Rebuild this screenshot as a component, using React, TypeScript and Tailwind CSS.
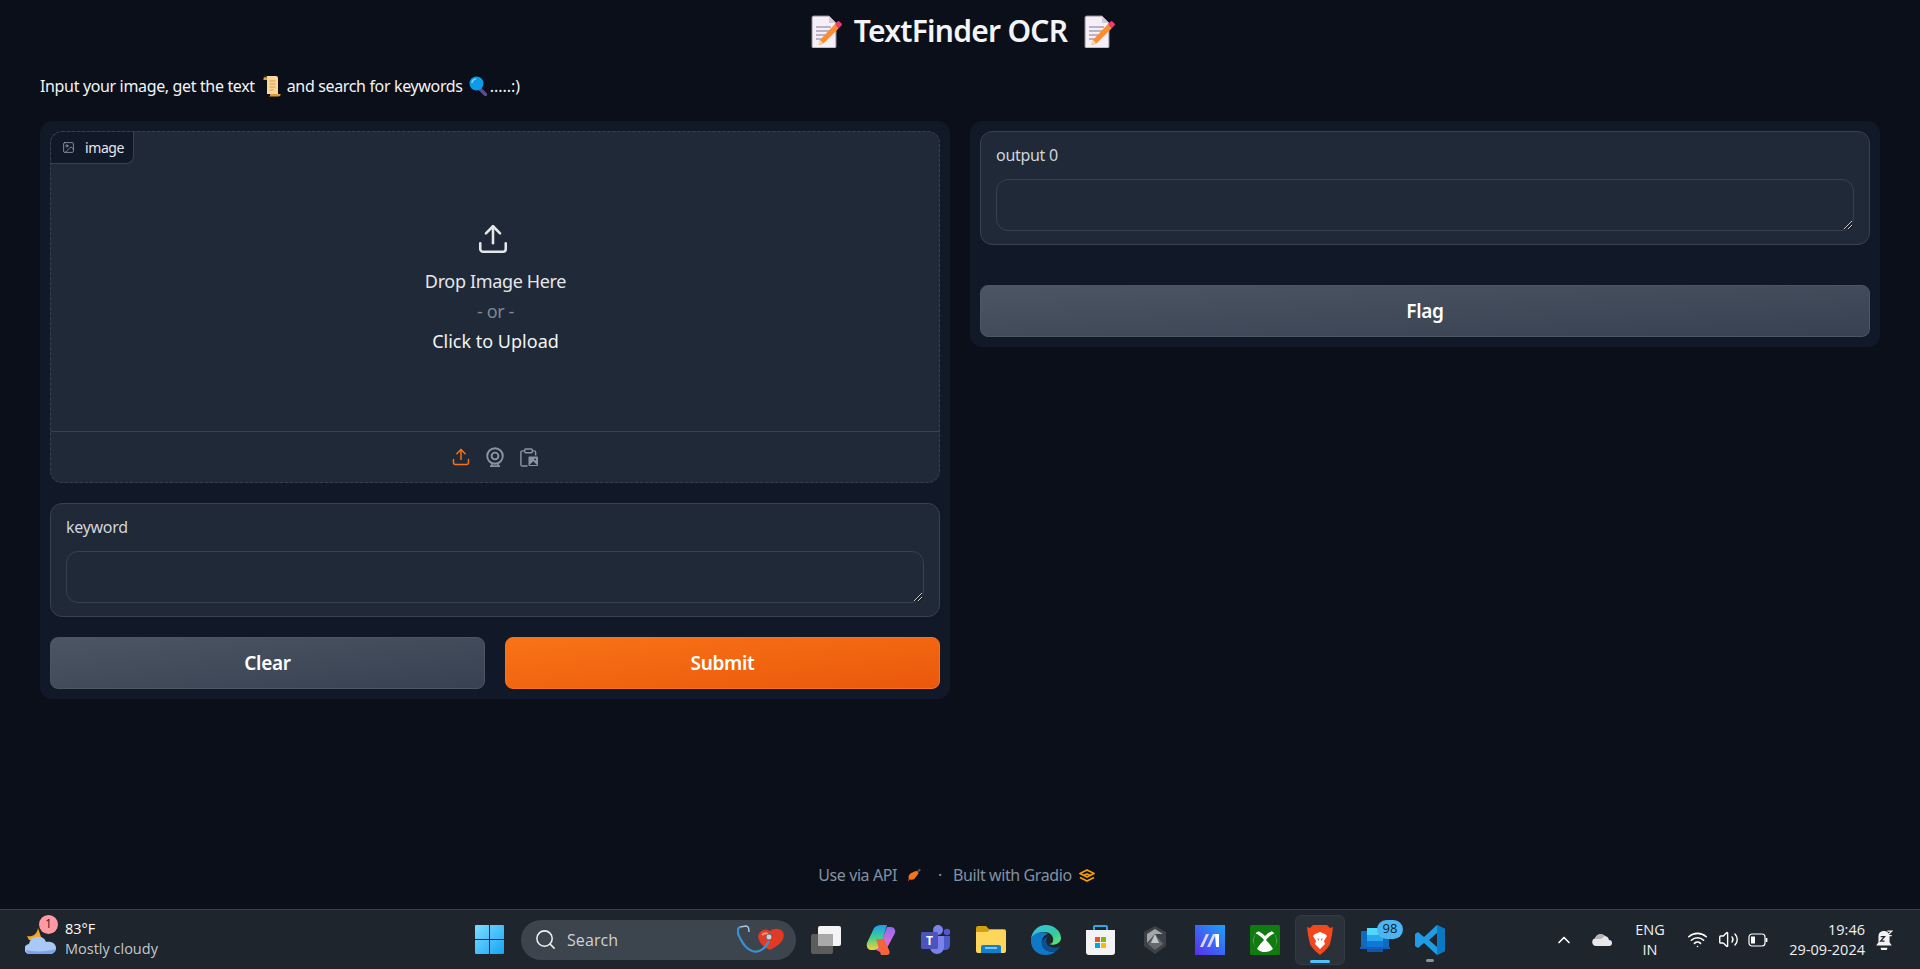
import { Image as ImageIcon, Search, Upload, ChevronUp, Wifi, Volume2 } from "lucide-react";

const uiFont = "font-['Noto_Sans',sans-serif]";
const osFont = "font-['Open_Sans',sans-serif]";

const Memo = () => (
  <svg viewBox="0 0 31 33" className="w-[31px] h-[33px] shrink-0">
    <path d="M1 2.5A1.5 1.5 0 0 1 2.5 1H18l7 7v23.5a1.5 1.5 0 0 1-1.500 1.500h-21A1.500 1.500 0 0 1 1 31.500z" fill="#f5eff7" stroke="#8d8796" strokeWidth="1" />
    <path d="M18 1v7h7z" fill="#d3cbdb" />
    <path d="M5 12h15M5 16h14M5 20h9M5 24h6" stroke="#a99fb6" strokeWidth="1.500" />
    <path d="M9 25 24 9l4 4-15 15-5 2z" fill="#ff8c2f" />
    <path d="M24 9l2.500-2.500a1.500 1.500 0 0 1 2 0l2 2a1.500 1.500 0 0 1 0 2L28 13z" fill="#f5386b" />
    <path d="M9 25l-2 5 5-2z" fill="#f6d5a8" />
  </svg>
);

const ScrollEmoji = () => (
  <svg viewBox="0 0 18 22" className="w-[18px] h-[22px] shrink-0">
    <path d="M1 1h12a2 2 0 0 1 2 2v16H4V3a2 2 0 0 0-3-2z" fill="#fcd79d" />
    <path d="M14 19h3.500a2 2 0 0 1-2 2.500H6a2 2 0 0 0 1-2.500z" fill="#e09a3d" />
    <path d="M0.500 3a2 2 0 0 1 3.500 0v2H0.500z" fill="#e09a3d" />
    <path d="M6.500 6h6M6.500 9h6M6.500 12h6M6.500 15h4" stroke="#dd9c47" strokeWidth="1.200" />
  </svg>
);

const Magnifier = () => (
  <svg viewBox="0 0 18 20" className="w-[18px] h-[20px] shrink-0">
    <path d="M11 13l5.500 5.500" stroke="#5b4a94" strokeWidth="3.500" strokeLinecap="round" />
    <circle cx="7.500" cy="7.500" r="7" fill="#0c9be8" />
    <path d="M3 7a4.500 4.500 0 0 1 4-4" stroke="#7fd3fa" strokeWidth="1.500" fill="none" />
  </svg>
);

const ApiRocket = () => (
  <svg viewBox="0 0 16 16" className="w-[15px] h-[16px] shrink-0">
    <path d="M10 5l3-4 2 2-4 3z" fill="#4b5563" />
    <path d="M10 3.500l2.500 2.500L8 12c-1.500 1.500-4 1.500-5 0.500L1 15l1-3.500C1 10 2 7.500 4 6z" fill="#f97316" />
  </svg>
);

const GradioLogo = () => (
  <svg viewBox="0 0 16 13" className="w-[16px] h-[13px] shrink-0" fill="none" stroke="#f59e0b" strokeWidth="1.800" strokeLinejoin="round">
    <path d="M8 1l7 3.500L8 8 1 4.500z" />
    <path d="M1 8.500L8 12l7-3.500" />
    <path d="M4.500 6.500L8 5l3.500 1.500" />
  </svg>
);

const WebcamIcon = () => (
  <svg viewBox="0 0 20 20" className="w-[20px] h-[20px]" fill="none" stroke="#8b94a3" strokeWidth="1.900">
    <circle cx="10" cy="9" r="7.800" />
    <circle cx="10" cy="9" r="3.400" />
    <path d="M5 19.200h10" strokeWidth="1.800" />
    <path d="M7 17v2M13 17v2" strokeWidth="1.500" />
  </svg>
);

const ClipboardImage = () => (
  <svg viewBox="0 0 20 20" className="w-[19px] h-[19px]" fill="none" stroke="#8b94a3" strokeWidth="1.500">
    <path d="M6 3H3.500A1.500 1.500 0 0 0 2 4.500v13A1.500 1.500 0 0 0 3.500 19H9" />
    <path d="M14 3h2a1.500 1.500 0 0 1 1.500 1.500V8" />
    <rect x="6" y="1" width="8" height="4" rx="1" />
    <rect x="10" y="9" width="10" height="10" rx="1" fill="#8b94a3" stroke="none" />
    <path d="M11 18l4-4 4 4z" fill="#1f2937" stroke="none" />
    <circle cx="17" cy="12" r="1" fill="#1f2937" stroke="none" />
  </svg>
);

const WindowsLogo = () => (
  <svg viewBox="0 0 29 29" className="w-[29px] h-[29px]">
    <defs>
      <linearGradient id="winA" x1="0" y1="0" x2="1" y2="1">
        <stop offset="0" stopColor="#7fdcff" />
        <stop offset="1" stopColor="#14a5f5" />
      </linearGradient>
    </defs>
    <path d="M0 1a1 1 0 0 1 1-1h13v14H0zM15 0h13a1 1 0 0 1 1 1v13H15zM0 15h14v14H1a1 1 0 0 1-1-1zM15 15h14v13a1 1 0 0 1-1 1H15z" fill="url(#winA)" />
  </svg>
);

const Stethoscope = () => (
  <svg viewBox="0 0 48 30" className="w-[48px] h-[30px]">
    <path d="M21 11c2-6 7-8 12-5 4-3 10-3 13 1 3 7-3 13-13 18-6-2-11-7-12-14z" fill="#e23a25" />
    <path d="M25 10c2-2 4-2 6-1" stroke="#ff8d76" strokeWidth="2" fill="none" />
    <path d="M3 2C0 3 0 8 3 13c3 6 6 11 12 13 7 2 13-2 17-10" fill="none" stroke="#3d91d1" strokeWidth="2.200" />
    <path d="M3 2l6-1c3 0 3 4 3 6" fill="none" stroke="#a8c4d8" strokeWidth="1.500" />
    <circle cx="32" cy="12" r="3" fill="#c8d3da" stroke="#5b6b75" strokeWidth="1" />
  </svg>
);

const TaskView = () => (
  <svg viewBox="0 0 30 28" className="w-[30px] h-[28px]">
    <rect x="0" y="8" width="22" height="20" rx="2" fill="#5c5c5c" />
    <rect x="7" y="0" width="23" height="20" rx="2" fill="#f4f4f4" />
    <rect x="7" y="8" width="15" height="12" fill="#a9a9a9" />
  </svg>
);

const Copilot = () => (
  <svg viewBox="0 0 30 30" className="w-[30px] h-[30px]">
    <defs>
      <linearGradient id="copA" x1="0" y1="0" x2="0" y2="1">
        <stop offset="0" stopColor="#1d9bf0" />
        <stop offset="0.500" stopColor="#3ecf8e" />
        <stop offset="1" stopColor="#f7d13a" />
      </linearGradient>
      <linearGradient id="copB" x1="0" y1="0" x2="0" y2="1">
        <stop offset="0" stopColor="#8e6cf0" />
        <stop offset="0.600" stopColor="#d56ce0" />
        <stop offset="1" stopColor="#f0569d" />
      </linearGradient>
    </defs>
    <path d="M8 3c2-2 4-3 7-3h6l-5 16c-1 4-3 9-8 9H5c-3 0-5-3-4-7z" fill="url(#copA)" />
    <path d="M14 27c3 0 5-1 7-4l8-15c1-3-1-6-4-6h-4l-5 13c-1 4-3 8-6 10z" fill="url(#copB)" />
    <path d="M10 14l5 16h6c3 0 3-3 2-5l-5-11z" fill="#f2643d" />
  </svg>
);

const Teams = () => (
  <svg viewBox="0 0 30 30" className="w-[30px] h-[30px]">
    <circle cx="17" cy="5" r="5" fill="#7b83eb" />
    <circle cx="26" cy="7" r="3.200" fill="#5059c9" />
    <path d="M21 11h8v9c0 3-2 5-5 5-2 0-3-1-3-2z" fill="#5059c9" />
    <path d="M9 11h14v11a7 7 0 0 1-14 0z" fill="#7b83eb" />
    <rect x="0" y="7" width="17" height="17" rx="1.500" fill="#4b53bc" />
    <text x="8.500" y="20" textAnchor="middle" fontSize="12" fontWeight="700" fill="#fff" fontFamily="Open Sans, sans-serif">T</text>
  </svg>
);

const Folder = () => (
  <svg viewBox="0 0 30 27" className="w-[30px] h-[27px]">
    <path d="M0 2a2 2 0 0 1 2-2h8l3 3h15a2 2 0 0 1 2 2v4H0z" fill="#d39f11" />
    <path d="M0 6h11l3-2h14a2 2 0 0 1 2 2v19a2 2 0 0 1-2 2H2a2 2 0 0 1-2-2z" fill="#ffd65c" />
    <path d="M5 27V21a2 2 0 0 1 2-2h16a2 2 0 0 1 2 2v6z" fill="#0f7fce" />
    <rect x="9" y="21" width="12" height="2" fill="#7cc4f4" />
  </svg>
);

const Edge = () => (
  <svg viewBox="0 0 30 30" className="w-[30px] h-[30px]">
    <defs>
      <linearGradient id="edgeA" x1="0" y1="0" x2="1" y2="1">
        <stop offset="0" stopColor="#35c1f1" />
        <stop offset="0.600" stopColor="#34c8a0" />
        <stop offset="1" stopColor="#66eb6e" />
      </linearGradient>
    </defs>
    <path d="M15 0C7 0 1 6 0 14c3-5 8-7 13-7 7 0 10 5 9 9 0 2-2 3-4 3 4 2 12 0 12-6C30 6 23 0 15 0z" fill="url(#edgeA)" />
    <path d="M0 14c-1 8 5 16 14 16 4 0 8-1 11-4-5 2-13 0-14-7-1-5 2-9 6-10-7-4-15 0-17 5z" fill="#0f78c7" />
    <path d="M11 19c1 7 9 9 14 7 2-1 3-3 4-5-3 2-7 2-11 0-3-2-4-6-1-9-4 1-7 3-6 7z" fill="#0c4f93" />
  </svg>
);

const Store = () => (
  <svg viewBox="0 0 29 30" className="w-[29px] h-[30px]">
    <path d="M8 5V2a1 1 0 0 1 1-1h11a1 1 0 0 1 1 1v3" fill="none" stroke="#2ea7e8" strokeWidth="2" />
    <path d="M0 5h29v22a3 3 0 0 1-3 3H3a3 3 0 0 1-3-3z" fill="#f3f3f3" />
    <rect x="9" y="12" width="5" height="5" fill="#f25022" />
    <rect x="15" y="12" width="5" height="5" fill="#7fba00" />
    <rect x="9" y="18" width="5" height="5" fill="#00a4ef" />
    <rect x="15" y="18" width="5" height="5" fill="#ffb900" />
  </svg>
);

const HexApp = () => (
  <svg viewBox="0 0 24 28" className="w-[24px] h-[28px]">
    <path d="M12 0l11 6v14l-11 8-11-8V6z" fill="#3e4247" />
    <path d="M12 3l8 5-8 0-8 9V8z" fill="#a3a7ab" />
    <path d="M12 8l8 10-8 6-7-6z" fill="#65696e" />
    <path d="M12 8l4 9H8z" fill="#c2c5c8" />
  </svg>
);

const MaApp = () => (
  <svg viewBox="0 0 30 30" className="w-[30px] h-[30px]">
    <defs>
      <linearGradient id="maA" x1="0" y1="1" x2="1" y2="0">
        <stop offset="0" stopColor="#5a2df0" />
        <stop offset="1" stopColor="#1aa3f5" />
      </linearGradient>
    </defs>
    <rect width="30" height="30" fill="url(#maA)" />
    <path d="M5 22l6-13h3l-6 13zM12 22l6-13h3l-6 13z" fill="#d9d6f7" />
    <path d="M20 9h4v13h-3z" fill="#fff" />
  </svg>
);

const Xbox = () => (
  <svg viewBox="0 0 30 30" className="w-[30px] h-[30px]">
    <rect width="30" height="30" rx="1.500" fill="#107c10" />
    <circle cx="15" cy="15.500" r="11.500" fill="#fff" />
    <path d="M7.500 6C11 7 13 9 15 11c2-2 4-4 7.500-5L22 4H8z" fill="#107c10" />
    <path d="M5 8.500c3 0 8 5 9 6.500-3 3-7 8-7.500 10.500L4.500 22 3.500 15z" fill="#107c10" />
    <path d="M25 8.500c-3 0-8 5-9 6.500 3 3 7 8 7.500 10.500l2-3.500 1-7z" fill="#107c10" />
  </svg>
);

const Brave = () => (
  <svg viewBox="0 0 26 30" className="w-[26px] h-[30px]">
    <path d="M6 0h14l3 3 3-1-1 8-2 9c-1 3-7 9-10 11-3-2-9-8-10-11L1 10 0 2l3 1z" fill="#f1481d" />
    <path d="M8 9l5-2 5 2 2 2-3 5 1 3-5 5-5-5 1-3-3-5z" fill="#fff" />
    <path d="M10 13l2 1v2zM16 13l-2 1v2z" fill="#f1481d" />
  </svg>
);

const OutlookApp = () => (
  <svg viewBox="0 0 30 24" className="w-[30px] h-[24px]">
    <rect x="1" y="3" width="28" height="17" rx="1" fill="#0f6cbd" />
    <rect x="7" y="0" width="16" height="7" fill="#50d9ff" />
    <rect x="7" y="7" width="16" height="6" fill="#28a8ea" />
    <rect x="7" y="13" width="16" height="6" fill="#0f78d4" />
    <rect x="7" y="19" width="16" height="5" fill="#0a5aa8" />
    <rect x="0" y="19" width="30" height="2" fill="#185abd" />
  </svg>
);

const VsCode = () => (
  <svg viewBox="0 0 30 30" className="w-[30px] h-[30px]">
    <path d="M22 0l8 4v22l-8 4-13-12-6 5-3-2V9l3-2 6 5zM22 8l-8 7 8 7z" fill="#1e9de6" />
    <path d="M22 0l8 4v22l-8 4z" fill="#0a78c4" />
  </svg>
);

const Weather = () => (
  <svg viewBox="0 0 32 28" className="w-[32px] h-[28px]">
    <path d="M2 10c5 1 10-1 11-8l4 12H4z" fill="#f6a623" />
    <path d="M5 28a5 5 0 0 1-1-10c1-5 5-8 10-7 4 0 6 2 7 5 6-1 10 2 10 6s-3 6-7 6z" fill="#a9c8f5" />
    <path d="M5 28a5 5 0 0 1-4-4c8 2 20 2 30-1-1 3-3 5-6 5z" fill="#7ba4e6" />
  </svg>
);

const OneDrive = () => (
  <svg viewBox="0 0 20 13" className="w-[20px] h-[13px]">
    <path d="M4 13a4 4 0 0 1-1-7.800A6 6 0 0 1 13 3a5 5 0 0 1 4 4 3 3 0 0 1 0 6z" fill="#e8e8e8" />
    <path d="M3 6a6 6 0 0 1 10-3L9 6z" fill="#b4b4b4" />
  </svg>
);

const Battery = () => (
  <svg viewBox="0 0 20 14" className="w-[20px] h-[14px]" fill="none" stroke="#fff" strokeWidth="1.200">
    <rect x="1" y="1" width="16" height="12" rx="3" />
    <rect x="3" y="3.500" width="4" height="7" fill="#fff" stroke="none" />
    <path d="M18.500 5v4" strokeWidth="1.800" />
  </svg>
);

const SnoozeBell = () => (
  <svg viewBox="0 0 16 18" className="w-[18px] h-[20px]">
    <path d="M7 1a5 5 0 0 1 6 5v5l2 3H1l2-3V6a5 5 0 0 1 4-5z" fill="#f2f2f2" />
    <path d="M5 16a3 3 0 0 0 6 0z" fill="#f2f2f2" />
    <path d="M5 6h3.500L5 10h3.500" stroke="#1e252d" strokeWidth="1.200" fill="none" />
    <path d="M11 1h4l-4 4h4" stroke="#f2f2f2" strokeWidth="1.200" fill="none" />
  </svg>
);

const ResizeHandle = () => (
  <svg viewBox="0 0 10 10" className="pointer-events-none absolute bottom-[1px] right-[1px] w-[10px] h-[10px]" fill="none" strokeWidth="1">
    <path d="M9 1 1 9M9 5 5 9" stroke="#c9cdd2" />
    <path d="M9.500 2 2 9.500M9.500 6 6 9.500" stroke="#0b0f19" />
  </svg>
);

function TextCard({ label }: { label: string }) {
  return (
    <div className="h-[114px] rounded-[12px] border border-[#374151] bg-[#1f2937] px-[15px] pt-[11px]">
      <div className="h-[24px] text-[16px] leading-[24px] tracking-[-0.3px] text-[#d1d5db]">{label}</div>
      <div className="relative mt-[12px]">
        <textarea
          aria-label={label}
          className="block h-[52px] w-full resize-none rounded-[12px] border border-[#374151] bg-[#1f2937] outline-none"
        />
        <ResizeHandle />
      </div>
    </div>
  );
}

export default function App() {
  return (
    <div className={`flex h-[969px] flex-col overflow-hidden bg-[#0b0f19] text-white ${uiFont}`}>
      <div className="px-[40px]">
        <div className="flex h-[62px] items-center justify-center gap-[12px] pl-[5px]">
          <Memo />
          <h1 className="mr-[4px] w-[214px] text-center text-[30px] leading-none font-semibold whitespace-nowrap tracking-[-0.75px] text-[#f3f4f6]">TextFinder OCR</h1>
          <Memo />
        </div>
        <div className="mt-[12px] flex h-[24px] items-center text-[16px] tracking-[-0.35px] text-[#f3f4f6]">
          <span>Input your image, get the text</span>
          <span className="ml-[8px] mr-[6px]"><ScrollEmoji /></span>
          <span>and search for keywords</span>
          <span className="ml-[6px] mr-[3px]"><Magnifier /></span>
          <span className="tracking-normal">.....:)</span>
        </div>

        <div className="mt-[23px] flex items-start gap-[20px]">
          <div className="flex h-[578px] w-[910px] flex-col gap-[20px] rounded-[12px] bg-[#111827] p-[10px]">
            <div className="relative flex h-[352px] flex-col rounded-[12px] border border-dashed border-[#374151] bg-[#1f2937]">
              <div className="absolute left-0 top-0 flex h-[32px] w-[83px] items-center gap-[10px] rounded-br-[8px] rounded-tl-[12px] border-b border-r border-[#374151] bg-[#111827] pl-[11px] text-[14px] tracking-[-0.4px] text-[#e5e7eb]">
                <ImageIcon size={13} strokeWidth={1.5} className="text-[#9ca3af]" />
                <span>image</span>
              </div>
              <div className="flex h-[300px] flex-col items-center border-b border-[#374151] pt-[90px] pl-[1px]">
                <Upload size={34} strokeWidth={1.8} className="-ml-[5px] text-[#e5e7eb]" />
                <div className="mt-[10px] text-[18px] leading-[30px] tracking-[-0.35px] text-[#e5e7eb]">Drop Image Here</div>
                <div className="text-[18px] leading-[30px] tracking-[-0.4px] text-[#7d8694]">- or -</div>
                <div className="text-[18px] leading-[30px] text-[#f3f4f6]">Click to Upload</div>
              </div>
              <div className="flex flex-1 items-center justify-center gap-[14px] pr-[1px]">
                <Upload size={20} strokeWidth={1.8} className="text-[#f97316]" />
                <WebcamIcon />
                <ClipboardImage />
              </div>
            </div>
            <TextCard label="keyword" />
            <div className="flex gap-[20px]">
              <button className="h-[52px] flex-1 rounded-[8px] border border-[#4b5563] bg-gradient-to-br from-[#4b5563] to-[#374151] text-[19px] font-semibold tracking-[-0.3px] text-white">Clear</button>
              <button className="h-[52px] flex-1 rounded-[8px] border border-[#f97316] bg-gradient-to-br from-[#f97316] to-[#ea580c] text-[19px] font-semibold tracking-[-0.3px] text-white">Submit</button>
            </div>
          </div>

          <div className="flex h-[226px] w-[910px] flex-col rounded-[12px] bg-[#111827] p-[10px]">
            <TextCard label="output 0" />
            <button className="mt-[40px] h-[52px] rounded-[8px] border border-[#4b5563] bg-gradient-to-br from-[#4b5563] to-[#374151] text-[19px] font-semibold tracking-[-0.3px] text-white">Flag</button>
          </div>
        </div>
      </div>

      <div className="flex flex-1 items-end justify-center pb-[24px] pr-[7px]">
        <div className="flex h-[20px] items-center text-[16px] tracking-[-0.4px] text-[#8391a3]">
          <span>Use via API</span>
          <span className="ml-[10px]"><ApiRocket /></span>
          <span className="ml-[16px] mr-[11px]">·</span>
          <span>Built with Gradio</span>
          <span className="ml-[7px]"><GradioLogo /></span>
        </div>
      </div>

      <div className={`flex h-[60px] shrink-0 items-center border-t border-[#3a4046] bg-[#1e252d] ${osFont}`}>
        <div className="relative ml-[25px] flex w-[450px] items-center gap-[8px]">
          <Weather />
          <div className="absolute left-[14px] -top-[6px] flex h-[19px] w-[19px] items-center justify-center rounded-full bg-[#ff99a4] text-[12px] text-[#1e252d]">1</div>
          <div className="-mt-[2px] text-[14.5px] leading-[20px]">
            <div className="text-white">83°F</div>
            <div className="text-[#c5c8cb]">Mostly cloudy</div>
          </div>
        </div>

        <WindowsLogo />
        <div className="ml-[17px] flex h-[40px] w-[275px] items-center rounded-full bg-[#3c444d] pl-[13px] pr-[11px]">
          <Search size={23} strokeWidth={1.6} className="text-[#f0f0f0]" />
          <span className="ml-[10px] text-[16px] tracking-[0.1px] text-[#d0d2d4]">Search</span>
          <span className="ml-auto"><Stethoscope /></span>
        </div>
        <div className="ml-[15px] flex items-center gap-[25px]">
          <TaskView />
          <Copilot />
          <Teams />
          <Folder />
          <Edge />
          <Store />
          <div className="flex w-[30px] justify-center"><HexApp /></div>
          <MaApp />
          <Xbox />
          <div className="relative -mx-[10px] flex h-[50px] w-[50px] items-center justify-center rounded-[6px] border border-[#333a41] bg-[#2a3138]">
            <Brave />
            <div className="absolute bottom-[1px] left-[14px] h-[3px] w-[20px] rounded-full bg-[#4cc2ff]" />
          </div>
          <div className="relative">
            <OutlookApp />
            <div className="absolute -right-[13px] -top-[8px] flex h-[19px] w-[26px] items-center justify-center rounded-full bg-[#4cb6f5] text-[13px] text-[#10202c]">98</div>
          </div>
          <div className="relative">
            <VsCode />
            <div className="absolute -bottom-[7px] left-[11px] h-[3px] w-[8px] rounded-full bg-[#8a8f94]" />
          </div>
        </div>

        <div className="ml-[109px] flex items-center">
          <ChevronUp size={20} strokeWidth={2} className="text-white" />
          <span className="ml-[18px]"><OneDrive /></span>
          <div className="ml-[20px] w-[36px] text-center text-[14.5px] leading-[20px] text-[#f0f0f0]">
            <div>ENG</div>
            <div>IN</div>
          </div>
          <Wifi size={21} strokeWidth={1.8} className="ml-[19px] text-white" />
          <Volume2 size={21} strokeWidth={1.6} className="ml-[10px] text-white" />
          <span className="ml-[9px]"><Battery /></span>
          <div className="ml-[13px] w-[84px] text-right text-[14.5px] leading-[20px] whitespace-nowrap text-[#f0f0f0]">
            <div>19:46</div>
            <div>29-09-2024</div>
          </div>
          <span className="ml-[10px]"><SnoozeBell /></span>
        </div>
      </div>
    </div>
  );
}
